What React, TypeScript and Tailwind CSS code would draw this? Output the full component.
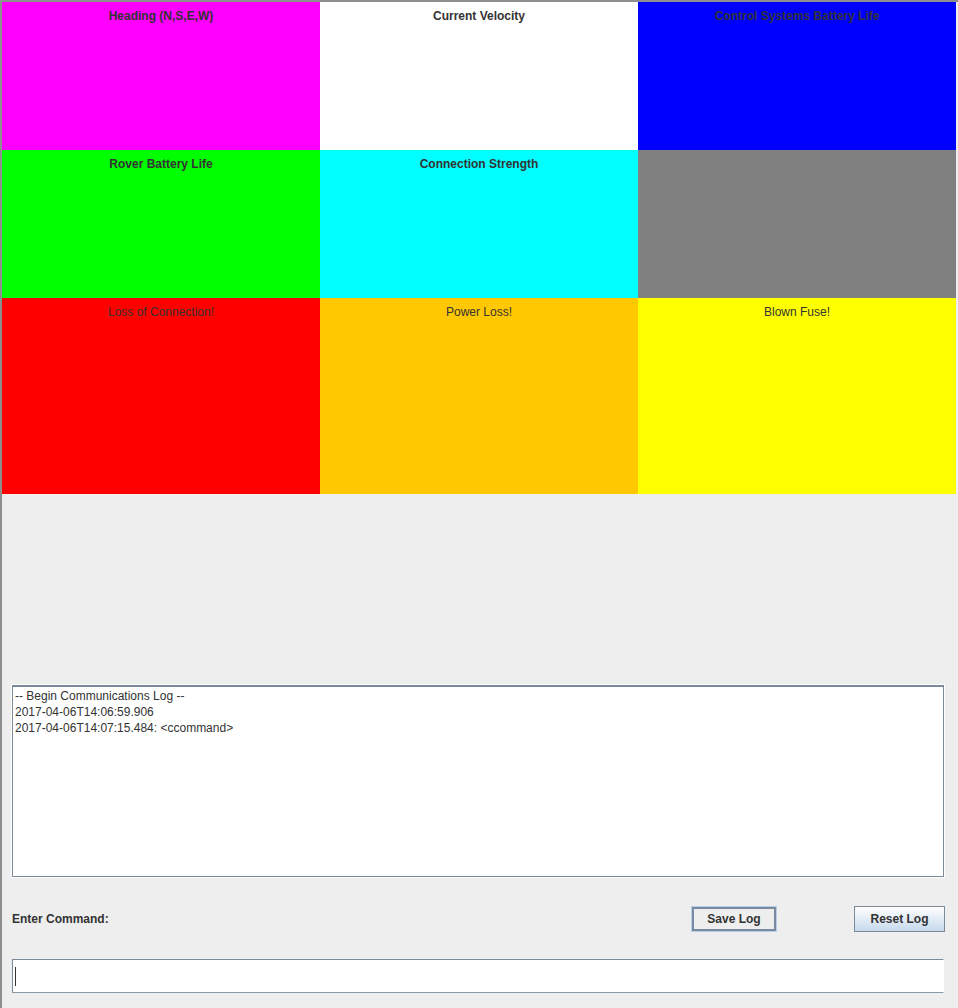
import React from 'react'

const cells = [
  { label: 'Heading (N,S,E,W)', bg: 'bg-[#ff00ff]', bold: true },
  { label: 'Current Velocity', bg: 'bg-white', bold: true },
  { label: 'Control Systems Battery Life', bg: 'bg-[#0000ff]', bold: true },
  { label: 'Rover Battery Life', bg: 'bg-[#00ff00]', bold: true },
  { label: 'Connection Strength', bg: 'bg-[#00ffff]', bold: true },
  { label: '', bg: 'bg-[#808080]', bold: true },
  { label: 'Loss of Connection!', bg: 'bg-[#ff0000]', bold: false },
  { label: 'Power Loss!', bg: 'bg-[#ffc800]', bold: false },
  { label: 'Blown Fuse!', bg: 'bg-[#ffff00]', bold: false },
]

const logLines = [
  '-- Begin Communications Log --',
  '2017-04-06T14:06:59.906',
  '2017-04-06T14:07:15.484: <ccommand>',
]

export default function App() {
  return (
    <div className="w-[958px] h-[1008px] bg-[#eeeeee] border-l-2 border-t-2 border-[#8e8e8e] flex flex-col font-['Liberation_Sans',Arial,sans-serif] text-[12px] text-[#333333] overflow-hidden">
      {/* status panels */}
      <div className="grid grid-cols-[318px_318px_318px] grid-rows-[148px_148px_196px] w-[954px]">
        {cells.map((c, i) => (
          <div key={i} className={`${c.bg} text-center pt-[7px] leading-[15px] ${c.bold ? 'font-bold' : ''}`}>
            {c.label}
          </div>
        ))}
      </div>

      {/* log + command */}
      <div className="pl-[10px] pr-[14px] flex flex-col">
        <div className="mt-[191px] h-[192px] bg-white border border-[#7a8a99] border-t-2 outline outline-1 outline-white">
          <div className="pl-[2px] pt-[1px] leading-[16px]">
            {logLines.map((l, i) => (
              <div key={i}>{l}</div>
            ))}
          </div>
        </div>

        <div className="h-[82px] pt-[2px] flex items-center">
          <span className="font-bold flex-1">Enter Command:</span>
          <button className="w-[84px] h-[24px] bg-[#eeeeee] border-2 border-[#7a8aa0] ring-1 ring-[#b8cfe5] font-bold text-[#333333]">
            Save Log
          </button>
          <button className="ml-[78px] -mr-[1px] w-[91px] h-[26px] bg-gradient-to-b from-white to-[#c6d9ec] border border-[#7a8a99] font-bold text-[#333333]">
            Reset Log
          </button>
        </div>

        <div className="h-[34px] bg-white border border-[#7a8a99] border-r-white border-b-[#8a99a6] flex items-center pl-[2px]">
          <div className="w-px h-[19px] bg-[#333333]" />
        </div>
      </div>
    </div>
  )
}
